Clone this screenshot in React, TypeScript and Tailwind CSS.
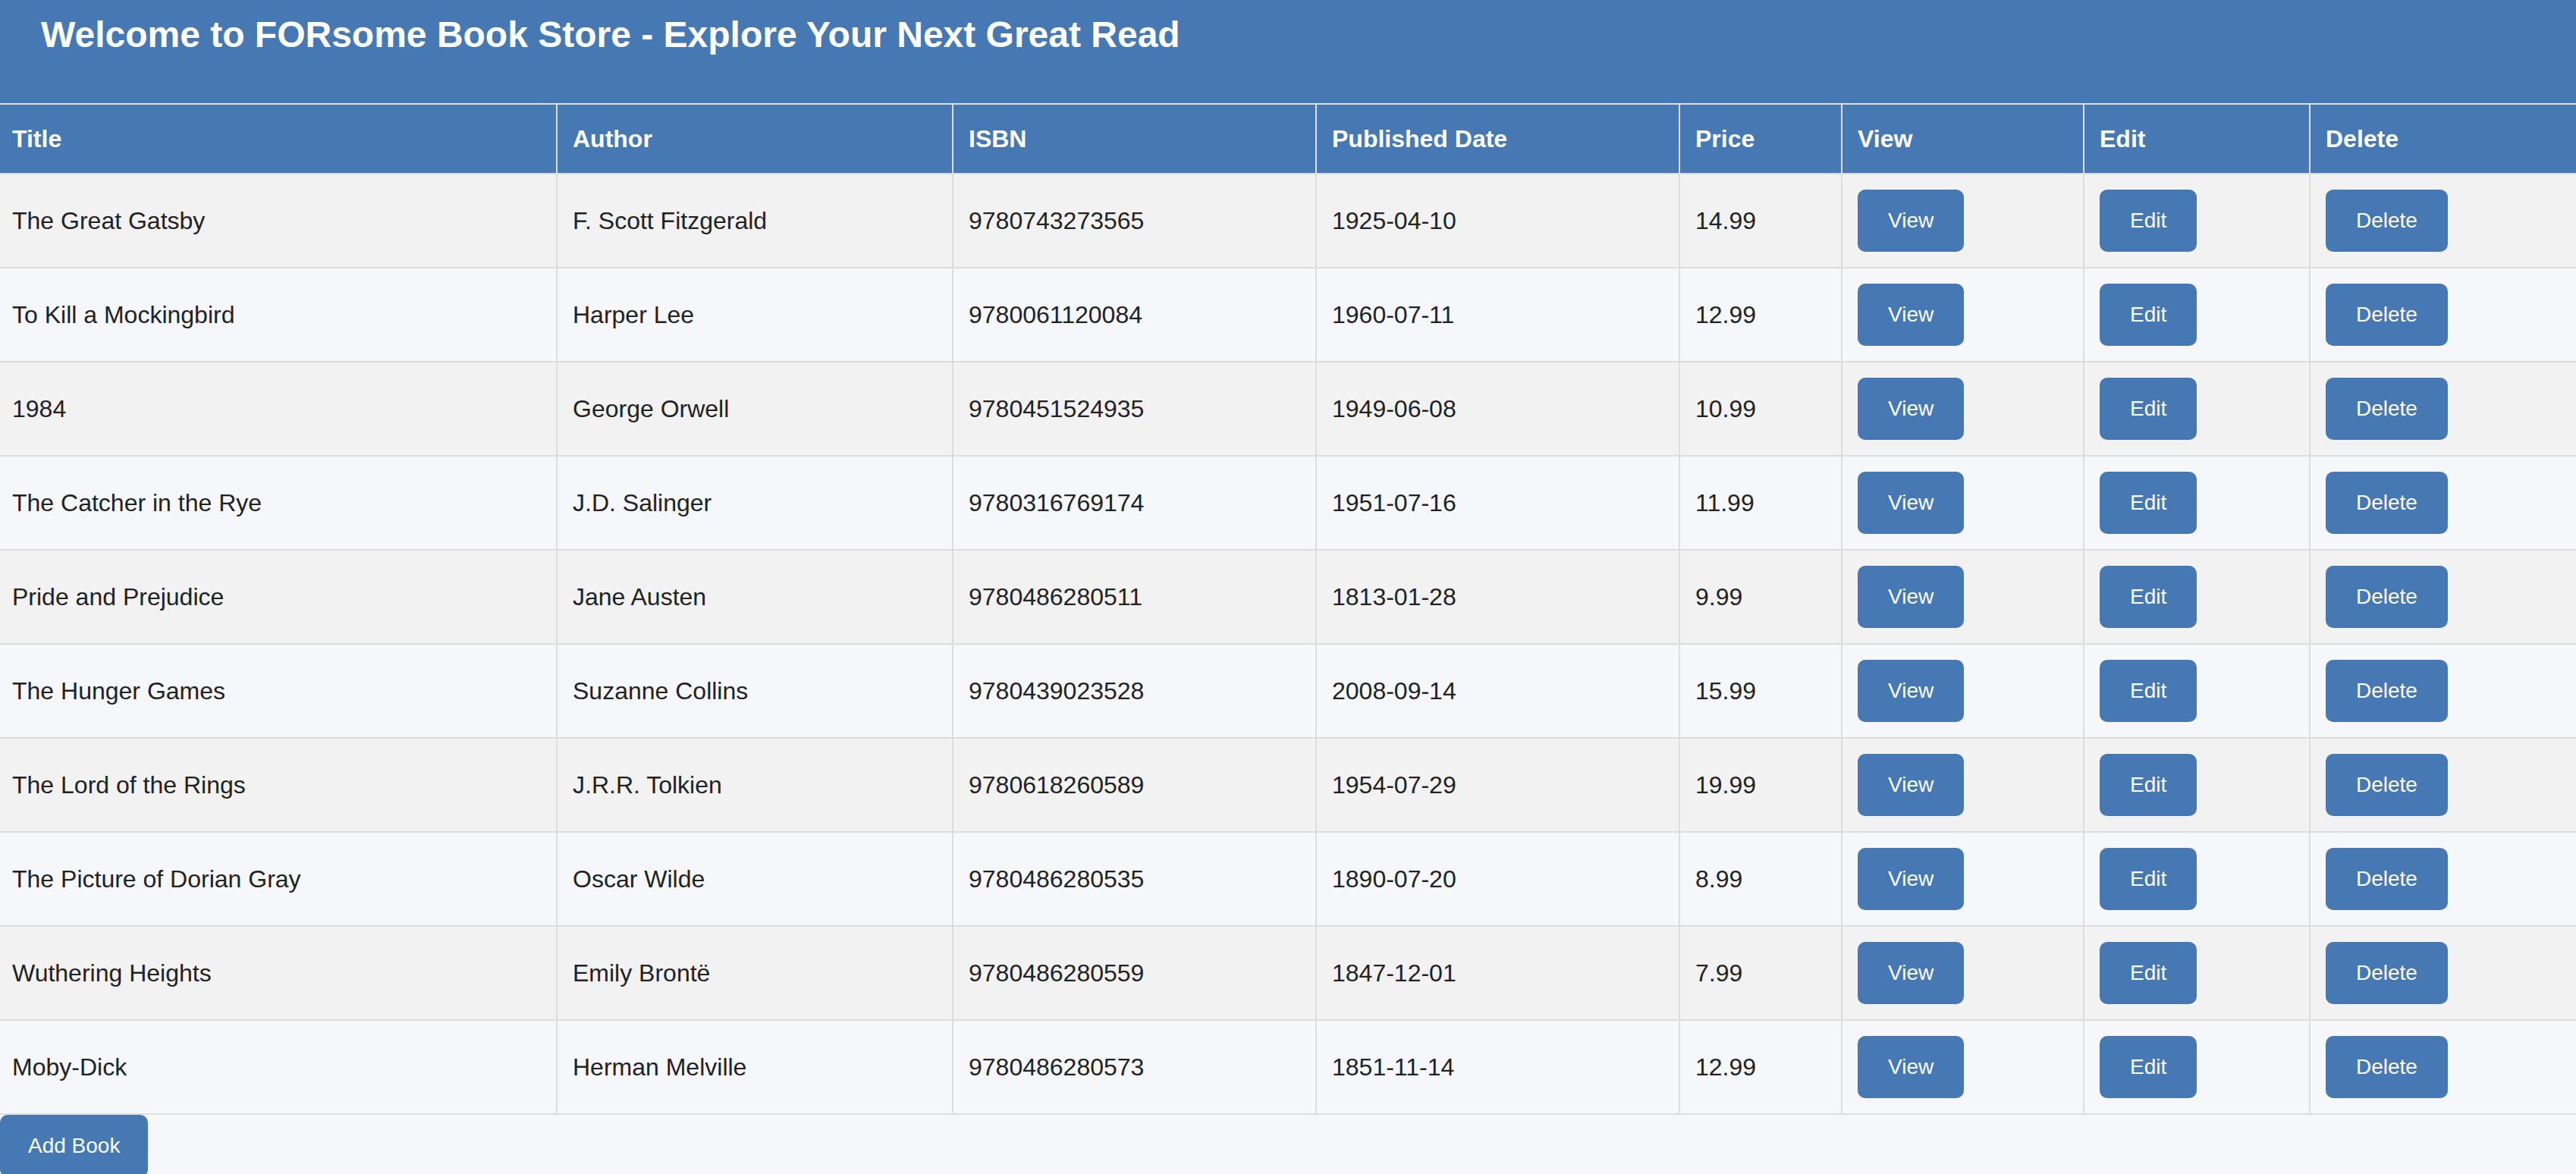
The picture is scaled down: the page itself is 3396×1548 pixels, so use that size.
import React from 'react';

interface Book {
  title: string;
  author: string;
  isbn: string;
  published: string;
  price: string;
}

const books: Book[] = [
  { title: 'The Great Gatsby', author: 'F. Scott Fitzgerald', isbn: '9780743273565', published: '1925-04-10', price: '14.99' },
  { title: 'To Kill a Mockingbird', author: 'Harper Lee', isbn: '9780061120084', published: '1960-07-11', price: '12.99' },
  { title: '1984', author: 'George Orwell', isbn: '9780451524935', published: '1949-06-08', price: '10.99' },
  { title: 'The Catcher in the Rye', author: 'J.D. Salinger', isbn: '9780316769174', published: '1951-07-16', price: '11.99' },
  { title: 'Pride and Prejudice', author: 'Jane Austen', isbn: '9780486280511', published: '1813-01-28', price: '9.99' },
  { title: 'The Hunger Games', author: 'Suzanne Collins', isbn: '9780439023528', published: '2008-09-14', price: '15.99' },
  { title: 'The Lord of the Rings', author: 'J.R.R. Tolkien', isbn: '9780618260589', published: '1954-07-29', price: '19.99' },
  { title: 'The Picture of Dorian Gray', author: 'Oscar Wilde', isbn: '9780486280535', published: '1890-07-20', price: '8.99' },
  { title: 'Wuthering Heights', author: 'Emily Brontë', isbn: '9780486280559', published: '1847-12-01', price: '7.99' },
  { title: 'Moby-Dick', author: 'Herman Melville', isbn: '9780486280573', published: '1851-11-14', price: '12.99' },
];

const headers = ['Title', 'Author', 'ISBN', 'Published Date', 'Price', 'View', 'Edit', 'Delete'];

const cell = 'border-2 border-[#dddddd] px-[20px] first:border-l-0 first:pl-[16px] last:border-r-0';

const ActionButton: React.FC<{ label: string }> = ({ label }) => (
  <button className="h-[82px] px-[40px] rounded-[10px] bg-[#4679b3] text-white text-[28px] leading-none">
    {label}
  </button>
);

const App: React.FC = () => {
  return (
    <div
      className="min-h-screen bg-[#f5f7fb] text-[#222]"
      style={{ fontFamily: '"Liberation Sans", Arial, sans-serif' }}
    >
      {/* Page header */}
      <header className="h-[136px] bg-[#4679b3] pl-[54px] pt-[18px]">
        <h1 className="text-[48px] leading-[56px] font-bold text-white">
          Welcome to FORsome Book Store - Explore Your Next Great Read
        </h1>
      </header>

      {/* Book list */}
      <table className="w-full table-fixed border-collapse text-[32px]">
        <colgroup>
          <col className="w-[734px]" />
          <col className="w-[522px]" />
          <col className="w-[479px]" />
          <col className="w-[479px]" />
          <col className="w-[214px]" />
          <col className="w-[319px]" />
          <col className="w-[298px]" />
          <col className="w-[351px]" />
        </colgroup>
        <thead>
          <tr className="h-[92px] bg-[#4679b3]">
            {headers.map((h) => (
              <th key={h} className={`${cell} text-left font-bold text-white`}>
                {h}
              </th>
            ))}
          </tr>
        </thead>
        <tbody>
          {books.map((book, i) => (
            <tr key={book.isbn} className={`h-[124px] ${i % 2 === 0 ? 'bg-[#f2f2f2]' : 'bg-[#f5f7fb]'}`}>
              <td className={cell}>{book.title}</td>
              <td className={cell}>{book.author}</td>
              <td className={cell}>{book.isbn}</td>
              <td className={cell}>{book.published}</td>
              <td className={cell}>{book.price}</td>
              <td className={cell}>
                <ActionButton label="View" />
              </td>
              <td className={cell}>
                <ActionButton label="Edit" />
              </td>
              <td className={cell}>
                <ActionButton label="Delete" />
              </td>
            </tr>
          ))}
        </tbody>
      </table>

      <button className="h-[82px] px-[37px] rounded-[10px] bg-[#4679b3] text-white text-[28px] leading-none">
        Add Book
      </button>
    </div>
  );
};

export default App;
